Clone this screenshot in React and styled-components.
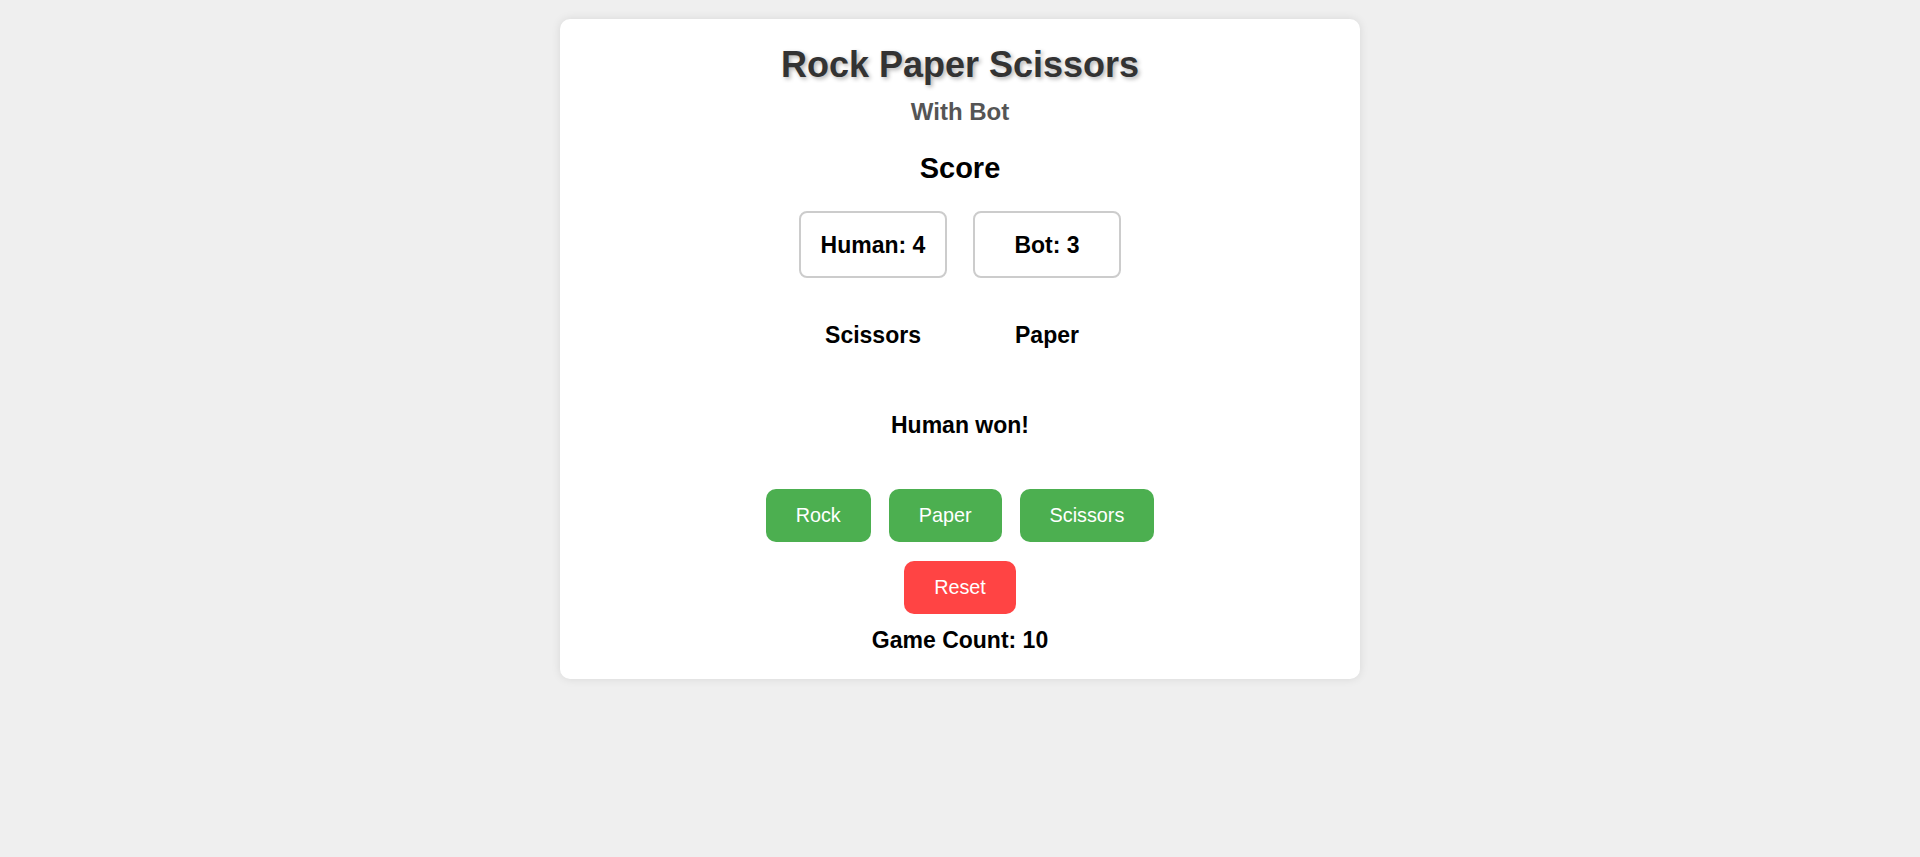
import React from "react";
import styled, { createGlobalStyle } from "styled-components";

const GlobalStyle = createGlobalStyle`
  html, body {
    margin: 0;
    padding: 0;
    background: #efefef;
    font-family: "Liberation Sans", Arial, sans-serif;
  }
  * { box-sizing: border-box; }
`;

const Page = styled.div`
  display: flex;
  justify-content: center;
  align-items: flex-start;
  padding-top: 19px;
  min-height: 857px;
`;

const Card = styled.div`
  width: 800px;
  background: #ffffff;
  border-radius: 10px;
  box-shadow: 0 0 10px rgba(0, 0, 0, 0.1);
  padding: 25px 20px 26px;
  display: flex;
  flex-direction: column;
  align-items: center;
  color: #000;
`;

const Title = styled.h1`
  margin: 0;
  font-size: 36px;
  line-height: 1.15;
  font-weight: 700;
  color: #333;
  text-shadow: 2px 2px 4px rgba(0, 0, 0, 0.3);
`;

const Subtitle = styled.h3`
  margin: 13px 0 0;
  font-size: 24px;
  line-height: 1.15;
  font-weight: 700;
  color: #555;
`;

const ScoreHeading = styled.h2`
  margin: 26px 0 0;
  font-size: 29px;
  line-height: 1.15;
  font-weight: 700;
`;

const Row = styled.div`
  display: flex;
  justify-content: center;
  gap: ${(p) => p.$gap}px;
  margin-top: ${(p) => p.$top}px;
`;

const ScoreBox = styled.div`
  width: 148px;
  height: 67px;
  border: 2px solid #ccc;
  border-radius: 8px;
  display: flex;
  align-items: center;
  justify-content: center;
  font-size: 23px;
  line-height: 1.15;
  font-weight: 700;
`;

const Choice = styled.div`
  width: 148px;
  text-align: center;
  font-size: 23px;
  line-height: 1.15;
  font-weight: 700;
`;

const Result = styled.div`
  margin-top: 63px;
  font-size: 23px;
  line-height: 1.15;
  font-weight: 700;
`;

const Button = styled.button`
  border: none;
  border-radius: 10px;
  padding: 15px 30px;
  font-family: "Liberation Sans", Arial, sans-serif;
  font-size: 19.8px;
  line-height: 1.15;
  color: #ffffff;
  background: ${(p) => (p.$danger ? "#ff4444" : "#4caf50")};
  cursor: pointer;
`;

const GameCount = styled.div`
  margin-top: 13px;
  font-size: 23px;
  line-height: 1.15;
  font-weight: 700;
`;

export default function App() {
  return (
    <>
      <GlobalStyle />
      <Page>
        <Card>
          <Title>Rock Paper Scissors</Title>
          <Subtitle>With Bot</Subtitle>
          <ScoreHeading>Score</ScoreHeading>
          <Row $gap={26} $top={26}>
            <ScoreBox>Human: 4</ScoreBox>
            <ScoreBox>Bot: 3</ScoreBox>
          </Row>
          <Row $gap={26} $top={44}>
            <Choice>Scissors</Choice>
            <Choice>Paper</Choice>
          </Row>
          <Result>Human won!</Result>
          <Row $gap={18} $top={51}>
            <Button>Rock</Button>
            <Button>Paper</Button>
            <Button>Scissors</Button>
          </Row>
          <Row $gap={0} $top={19}>
            <Button $danger>Reset</Button>
          </Row>
          <GameCount>Game Count: 10</GameCount>
        </Card>
      </Page>
    </>
  );
}
